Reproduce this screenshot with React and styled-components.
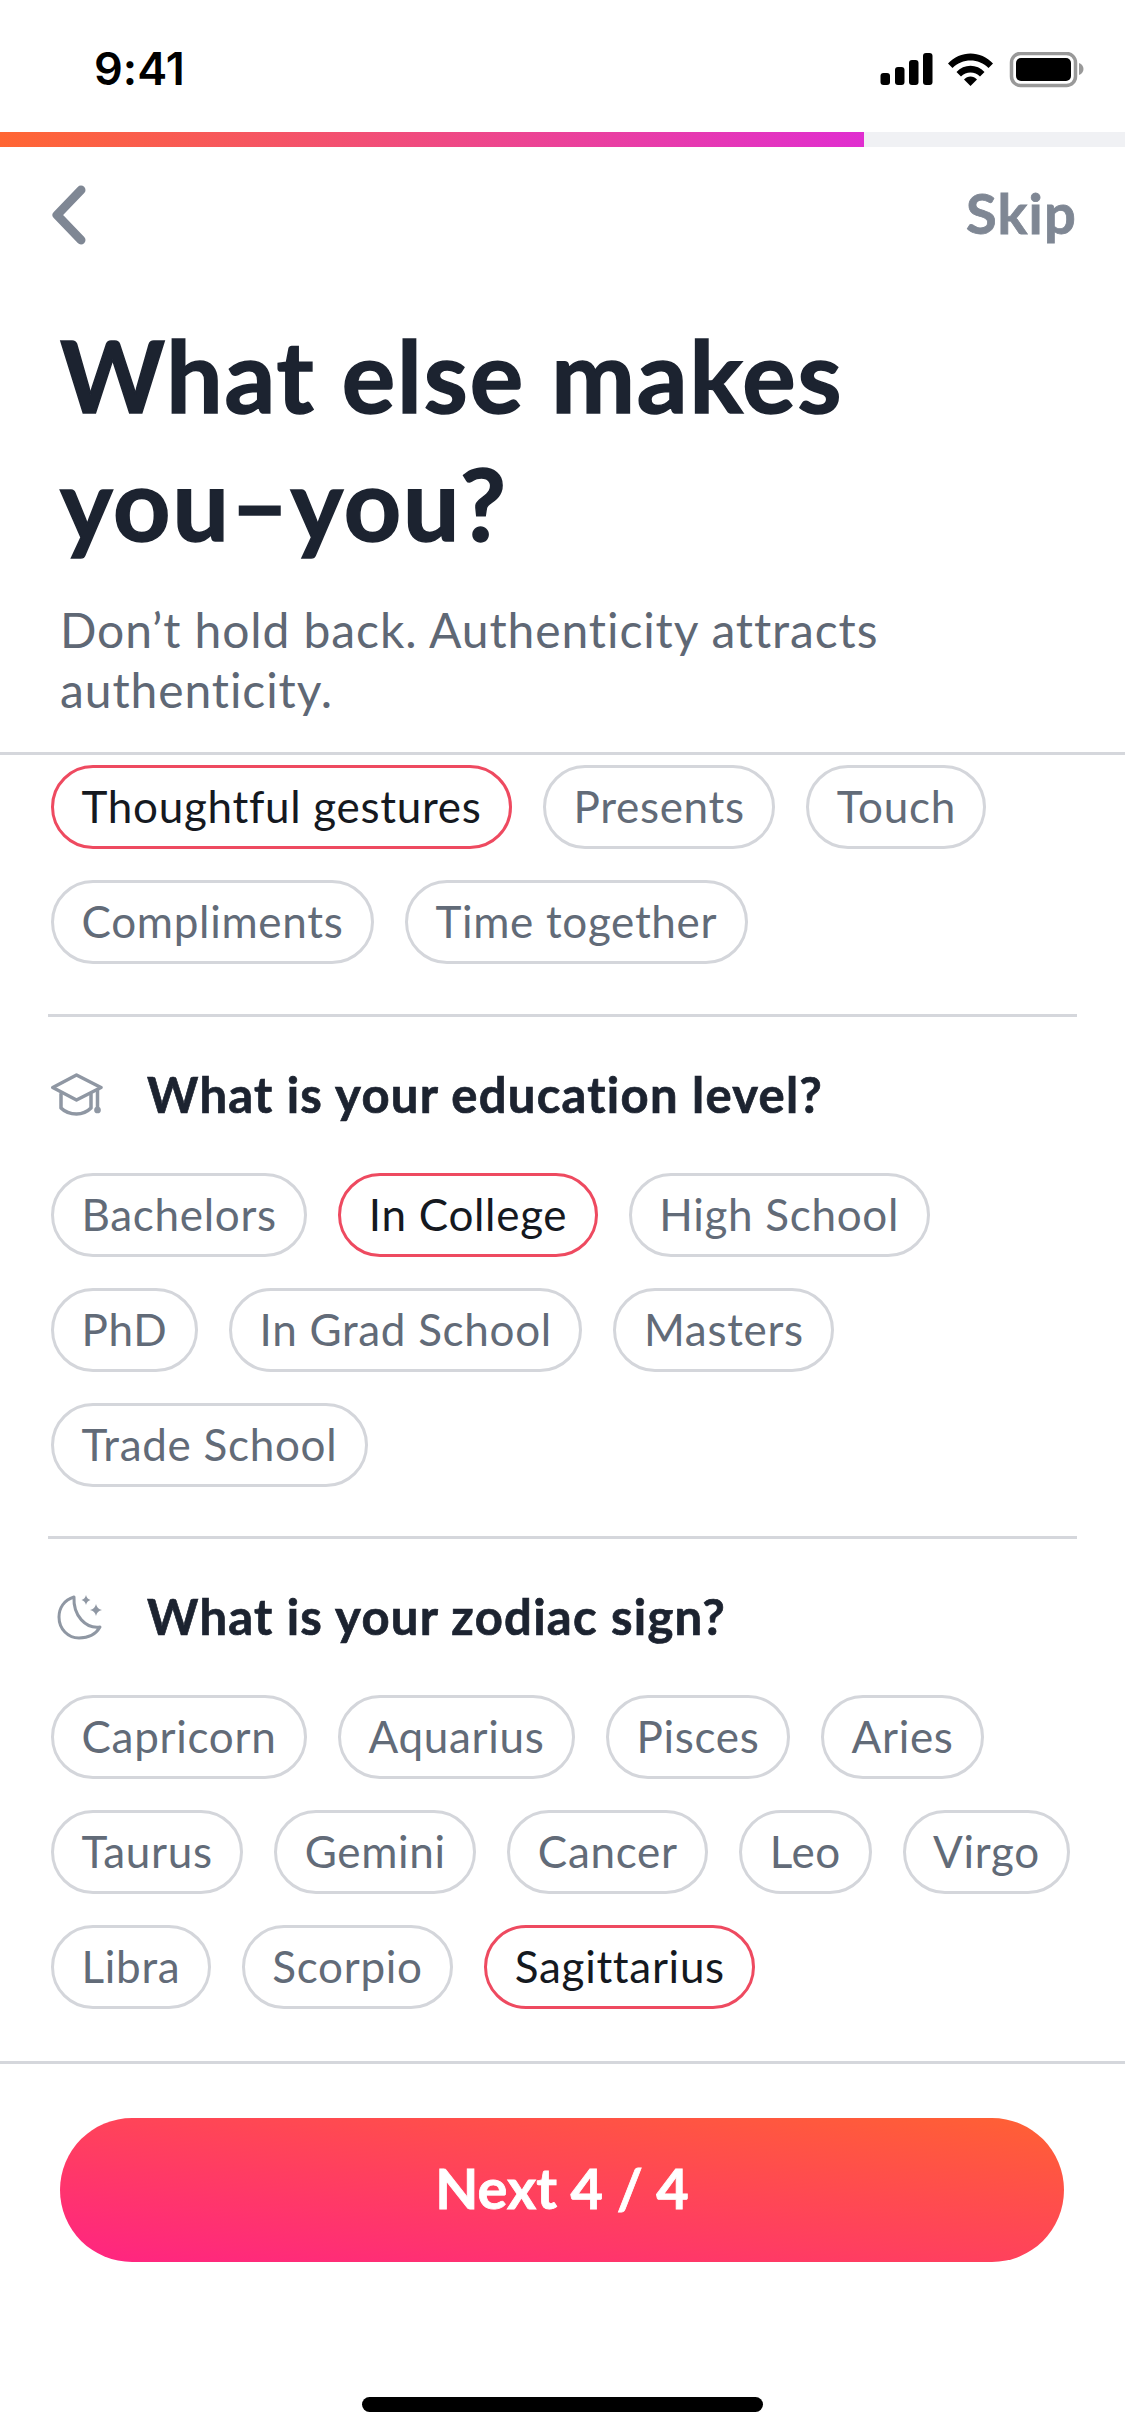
import styled, { createGlobalStyle } from 'styled-components';

const GlobalStyle = createGlobalStyle`
  html, body {
    margin: 0;
    padding: 0;
    background: #fff;
  }
  * {
    box-sizing: border-box;
  }
`;

const Screen = styled.div`
  width: 1125px;
  height: 2436px;
  display: flex;
  flex-direction: column;
  overflow: hidden;
  background: #fff;
  font-family: Lato, "Liberation Sans", sans-serif;
  font-variant-ligatures: none;
`;

const StatusBar = styled.div`
  height: 132px;
  flex: none;
  display: flex;
  justify-content: space-between;
  align-items: flex-start;
  padding: 42px 41px 0 94px;
`;

const Clock = styled.span`
  font-family: Inter, sans-serif;
  font-size: 45px;
  line-height: 54px;
  font-weight: 600;
  color: #000;
`;

const StatusIcons = styled.svg`
  display: block;
  margin-top: 10px;
`;

const ProgressTrack = styled.div`
  height: 15px;
  flex: none;
  background: #f0f1f4;
`;

const ProgressFill = styled.div`
  height: 100%;
  background: linear-gradient(90deg, #ff6633 0%, #e02ed0 100%);
`;

const Nav = styled.div`
  flex: none;
  height: 110px;
  display: flex;
  justify-content: space-between;
  align-items: center;
  padding: 26px 48px 0 47px;
`;

const Skip = styled.span`
  margin-top: -6px;
  font-size: 56px;
  font-weight: 700;
  letter-spacing: 1.2px;
  -webkit-text-stroke: 0.8px #7f8794;
  color: #7f8794;
`;

const Intro = styled.div`
  flex: none;
  padding: 53px 60px 0;
  height: 495px;
`;

const Title = styled.h1`
  margin: 0;
  font-size: 100px;
  line-height: 128px;
  font-weight: 700;
  letter-spacing: 1.9px;
  -webkit-text-stroke: 1.5px #1c2330;
  color: #1c2330;
`;

const Subtitle = styled.p`
  margin: 34px 0 0;
  font-size: 48px;
  line-height: 60px;
  font-weight: 400;
  letter-spacing: 0.9px;
  color: #5f6875;
`;

const Questions = styled.div`
  flex: 1;
  min-height: 0;
  overflow: hidden;
  border-top: 3px solid #d5d7dc;
  padding-top: 10px;
`;

const Group = styled.section`
  margin: 0 48px;
  padding: ${(p) => (p.$first ? '0 0 50px' : '47px 0 49px')};
  border-top: ${(p) => (p.$first ? 'none' : '3px solid #d5d7dc')};
`;

const GroupHeading = styled.div`
  display: flex;
  align-items: center;
  height: 60px;
  margin-bottom: 49px;
  padding-left: 3px;
  gap: 44px;
`;

const GroupTitle = styled.h2`
  margin: 0;
  font-size: 49px;
  font-weight: 700;
  letter-spacing: 1.25px;
  -webkit-text-stroke: 0.7px #1c2330;
  color: #1c2330;
`;

const Chips = styled.div`
  display: flex;
  flex-wrap: wrap;
  gap: 31px;
  padding-left: 3px;
`;

const Chip = styled.span`
  height: 84px;
  display: inline-flex;
  align-items: center;
  padding: 0 27.5px 3px;
  border: 3px solid ${(p) => (p.$selected ? '#ee4a60' : '#d4d6db')};
  border-radius: 42px;
  font-size: 44px;
  letter-spacing: 0.7px;
  color: ${(p) => (p.$selected ? '#15191f' : '#626b78')};
`;

const Footer = styled.div`
  flex: none;
  height: 375px;
  border-top: 3px solid #d5d7dc;
  padding: 54px 60px 0 60px;
`;

const NextButton = styled.button`
  display: block;
  width: 1004px;
  height: 144px;
  padding: 0 0 5px;
  border: none;
  border-radius: 72px;
  background: linear-gradient(to bottom left, #ff6133 0%, #ff2482 100%);
  color: #fff;
  font-family: inherit;
  font-size: 56px;
  font-weight: 700;
  -webkit-text-stroke: 0.8px #fff;
`;

const HomeIndicator = styled.div`
  width: 401px;
  height: 15px;
  margin: 135px auto 0;
  border-radius: 8px;
  background: #000;
`;

const groups = [
  {
    id: 'love',
    chips: ['Thoughtful gestures', 'Presents', 'Touch', 'Compliments', 'Time together'],
    selected: 'Thoughtful gestures',
  },
  {
    id: 'education',
    title: 'What is your education level?',
    icon: 'cap',
    chips: ['Bachelors', 'In College', 'High School', 'PhD', 'In Grad School', 'Masters', 'Trade School'],
    selected: 'In College',
  },
  {
    id: 'zodiac',
    title: 'What is your zodiac sign?',
    icon: 'moon',
    chips: ['Capricorn', 'Aquarius', 'Pisces', 'Aries', 'Taurus', 'Gemini', 'Cancer', 'Leo', 'Virgo', 'Libra', 'Scorpio', 'Sagittarius'],
    selected: 'Sagittarius',
  },
];

const CapIcon = () => (
  <svg width="52" height="45" viewBox="0 0 52 45" fill="none" stroke="#8f97a3" strokeWidth="3.5" strokeLinejoin="round" strokeLinecap="round">
    <path d="M25.5 3 50 15.5 25.5 28 1.8 15.5Z" />
    <path d="M10 22v14c4 4 10 6 15.5 6S36 40 40 36V22" />
    <path d="M46.5 18v19" />
    <circle cx="46.5" cy="38" r="1.6" fill="#8f97a3" />
  </svg>
);

const MoonIcon = () => (
  <svg width="52" height="52" viewBox="0 0 52 52" fill="none" stroke="#8f97a3" strokeWidth="3" strokeLinejoin="round">
    <path d="M23 7C13 10 8 18 8 27C8 39 17 48 28 48C37 48 45 44 49 37C35 39 22 26 23 7Z" />
    <path d="M45 14q1 5 6 6q-5 1-6 6q-1-5-6-6q5-1 6-6Z" fill="#8f97a3" stroke="none" />
    <path d="M35 5q.8 4 4.5 5q-3.700 1-4.500 5q-.8-4-4.500-5q3.700-1 4.500-5Z" fill="#8f97a3" stroke="none" />
  </svg>
);

const icons = { cap: CapIcon, moon: MoonIcon };

const App = () => (
  <Screen>
    <GlobalStyle />
    <StatusBar>
      <Clock>9:41</Clock>
      <StatusIcons width="204" height="36" viewBox="882 52 204 36">
        <rect x="882.500" y="73" width="9.500" height="12" rx="3" />
        <rect x="897" y="67" width="9.500" height="18" rx="3" />
        <rect x="911" y="60" width="9.500" height="25" rx="3" />
        <rect x="925" y="53" width="9.500" height="32" rx="3" />
        <path d="M950 63.500C962 50 983 50 995 63.500L990.500 68C981 58 964 58 954.500 68Z" />
        <path d="M958.500 72C966 63.500 979 63.500 986.500 72L982 76.500C977 71 968 71 963 76.500Z" />
        <path d="M966 79.500C969.500 75.500 975.500 75.500 979 79.500L972.500 86Z" />
        <rect x="1013.500" y="53.500" width="64" height="32" rx="9" fill="none" stroke="#999" strokeWidth="3.500" />
        <rect x="1018" y="58" width="55" height="23" rx="5" />
        <path d="M1081 63c3 1 4.500 3.500 4.500 6s-1.500 5-4.500 6Z" fill="#999" />
      </StatusIcons>
    </StatusBar>
    <ProgressTrack>
      <ProgressFill style={{ width: `${(864 / 1125) * 100}%` }} />
    </ProgressTrack>
    <Nav>
      <svg width="44" height="60" viewBox="0 0 44 60" fill="none" stroke="#7f8794" strokeWidth="9" strokeLinecap="round" strokeLinejoin="round">
        <path d="M34 5 10 30 34 55" />
      </svg>
      <Skip>Skip</Skip>
    </Nav>
    <Intro>
      <Title>What else makes<br />you–you?</Title>
      <Subtitle>Don’t hold back. Authenticity attracts authenticity.</Subtitle>
    </Intro>
    <Questions>
      {groups.map((group, i) => {
        const Icon = icons[group.icon];
        return (
          <Group key={group.id} $first={i === 0}>
            {group.title && (
              <GroupHeading>
                <Icon />
                <GroupTitle>{group.title}</GroupTitle>
              </GroupHeading>
            )}
            <Chips>
              {group.chips.map((chip) => (
                <Chip key={chip} $selected={chip === group.selected}>{chip}</Chip>
              ))}
            </Chips>
          </Group>
        );
      })}
    </Questions>
    <Footer>
      <NextButton>Next 4 / 4</NextButton>
      <HomeIndicator />
    </Footer>
  </Screen>
);

export default App;
